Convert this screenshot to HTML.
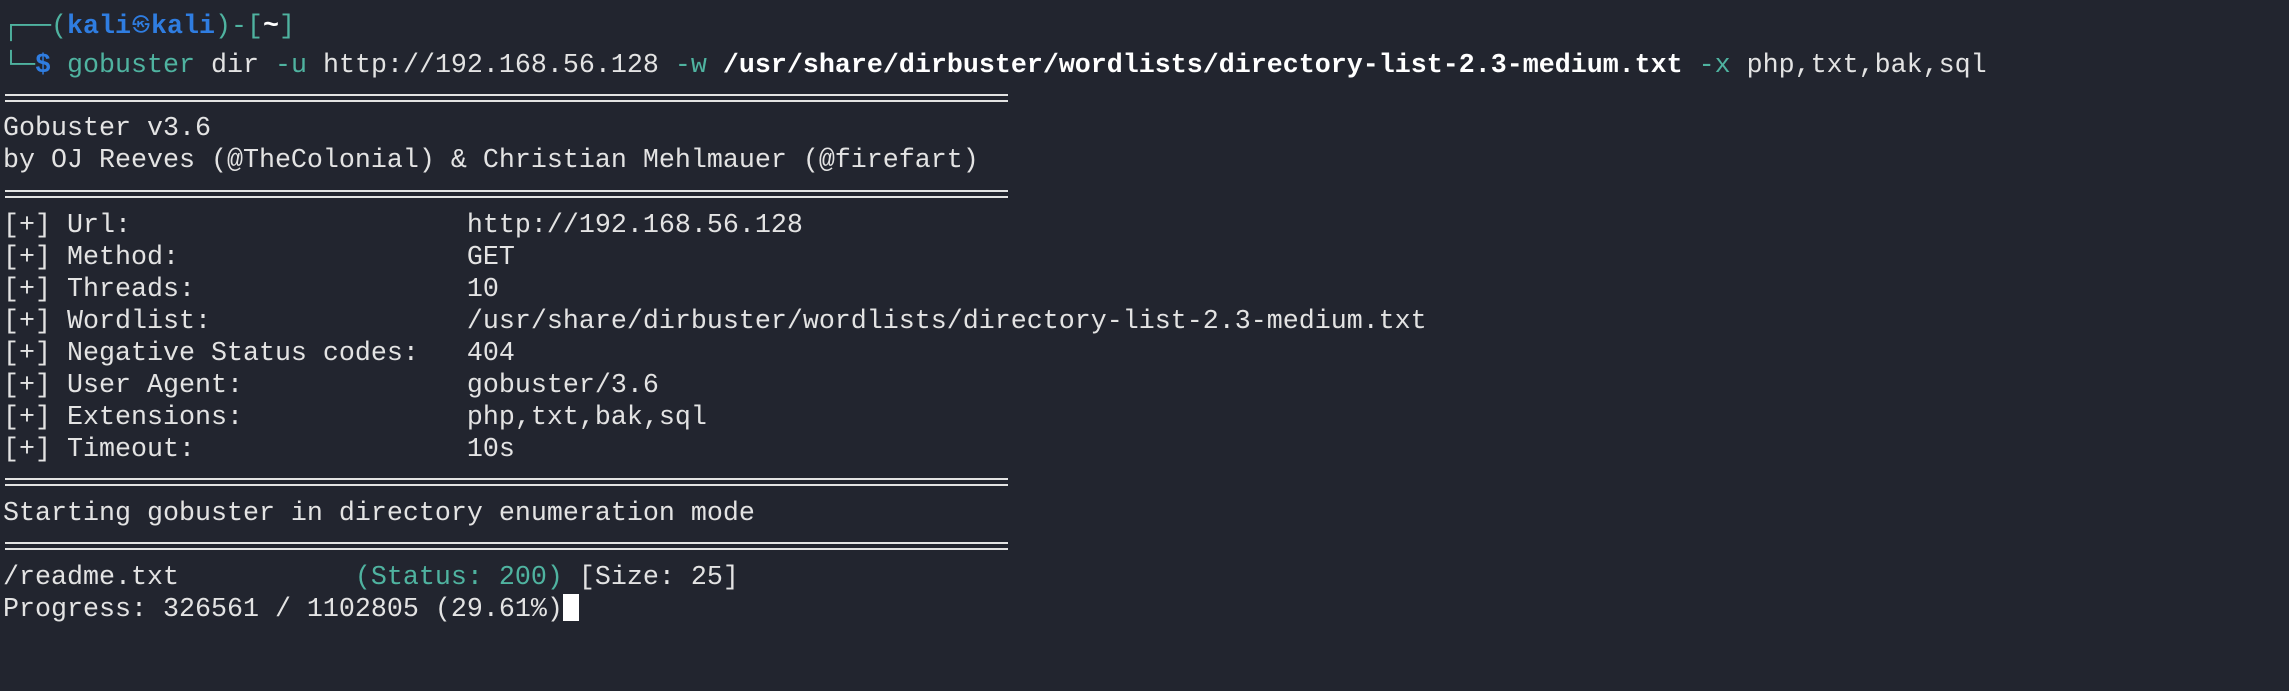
<!DOCTYPE html>
<html><head><style>
html,body{margin:0;padding:0;background:#22252f;width:2289px;height:691px;overflow:hidden}
.l{position:absolute;left:3px;font-family:"Liberation Mono","DejaVu Sans Mono",monospace;font-size:26.67px;line-height:32px;height:32px;white-space:pre;color:#e3e3e3}
.t{color:#4fb3a0}.b{color:#2f7de1;font-weight:bold}.w{font-weight:bold;color:#fff}
.sep{position:absolute;left:5px;width:1003px;height:2px;background:#e3e3e3}
.cur{display:inline-block;width:16px;height:27px;background:#fff;vertical-align:-5px}
.sk{display:inline-block;width:20px;text-align:center;font-size:18px;font-weight:normal;vertical-align:2px}
</style></head><body>
<div class="l" style="top:11px"><span class="t">┌──(</span><span class="b">kali<span class="sk">㉿</span>kali</span><span class="t">)-[</span><span class="w">~</span><span class="t">]</span></div>
<div class="l" style="top:50px"><span class="t">└─</span><span class="b">$</span> <span class="t">gobuster</span> dir <span class="t">-u</span> http://192.168.56.128 <span class="t">-w</span> <span class="w">/usr/share/dirbuster/wordlists/directory-list-2.3-medium.txt</span> <span class="t">-x</span> php,txt,bak,sql</div>
<div class="sep" style="top:94px"></div><div class="sep" style="top:100px"></div>
<div class="l" style="top:113px">Gobuster v3.6</div>
<div class="l" style="top:145px">by OJ Reeves (@TheColonial) &amp; Christian Mehlmauer (@firefart)</div>
<div class="sep" style="top:190px"></div><div class="sep" style="top:196px"></div>
<div class="l" style="top:210px">[+] Url:                     http://192.168.56.128</div>
<div class="l" style="top:242px">[+] Method:                  GET</div>
<div class="l" style="top:274px">[+] Threads:                 10</div>
<div class="l" style="top:306px">[+] Wordlist:                /usr/share/dirbuster/wordlists/directory-list-2.3-medium.txt</div>
<div class="l" style="top:338px">[+] Negative Status codes:   404</div>
<div class="l" style="top:370px">[+] User Agent:              gobuster/3.6</div>
<div class="l" style="top:402px">[+] Extensions:              php,txt,bak,sql</div>
<div class="l" style="top:434px">[+] Timeout:                 10s</div>
<div class="sep" style="top:478px"></div><div class="sep" style="top:484px"></div>
<div class="l" style="top:498px">Starting gobuster in directory enumeration mode</div>
<div class="sep" style="top:542px"></div><div class="sep" style="top:548px"></div>
<div class="l" style="top:562px">/readme.txt           <span class="t">(Status: 200)</span> [Size: 25]</div>
<div class="l" style="top:594px">Progress: 326561 / 1102805 (29.61%)<span class="cur"></span></div>
</body></html>
